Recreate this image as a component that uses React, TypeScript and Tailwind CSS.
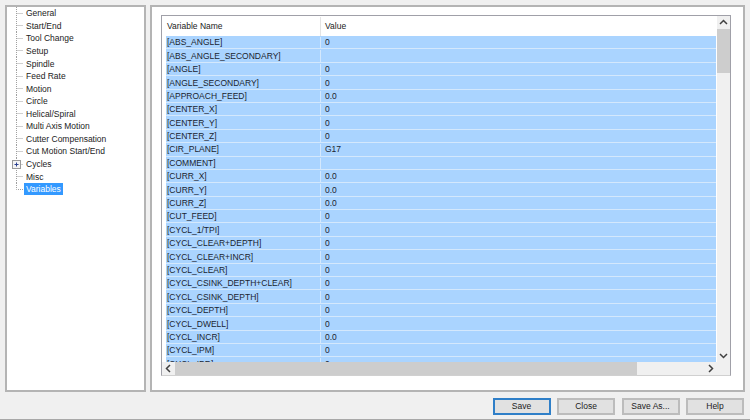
const treeItems = [
  'General', 'Start/End', 'Tool Change', 'Setup', 'Spindle', 'Feed Rate', 'Motion', 'Circle',
  'Helical/Spiral', 'Multi Axis Motion', 'Cutter Compensation', 'Cut Motion Start/End', 'Cycles', 'Misc', 'Variables',
]

const rows: [string, string][] = [
  ['[ABS_ANGLE]', '0'],
  ['[ABS_ANGLE_SECONDARY]', ''],
  ['[ANGLE]', '0'],
  ['[ANGLE_SECONDARY]', '0'],
  ['[APPROACH_FEED]', '0.0'],
  ['[CENTER_X]', '0'],
  ['[CENTER_Y]', '0'],
  ['[CENTER_Z]', '0'],
  ['[CIR_PLANE]', 'G17'],
  ['[COMMENT]', ''],
  ['[CURR_X]', '0.0'],
  ['[CURR_Y]', '0.0'],
  ['[CURR_Z]', '0.0'],
  ['[CUT_FEED]', '0'],
  ['[CYCL_1/TPI]', '0'],
  ['[CYCL_CLEAR+DEPTH]', '0'],
  ['[CYCL_CLEAR+INCR]', '0'],
  ['[CYCL_CLEAR]', '0'],
  ['[CYCL_CSINK_DEPTH+CLEAR]', '0'],
  ['[CYCL_CSINK_DEPTH]', '0'],
  ['[CYCL_DEPTH]', '0'],
  ['[CYCL_DWELL]', '0'],
  ['[CYCL_INCR]', '0.0'],
  ['[CYCL_IPM]', '0'],
  ['[CYCL_IPR]', '0'],
]

function TreeRow({ label, index }: { label: string; index: number }) {
  const last = index === treeItems.length - 1
  const hasPlus = label === 'Cycles'
  return (
    <div className="flex h-[12.57px] items-center">
      <svg width="17" height="13" className="shrink-0 overflow-visible text-[#a0a0a0]">
        <path d={last ? 'M9.5 0V6.5H16' : 'M9.5 0V13M9.5 6.5H16'} fill="none" stroke="currentColor" strokeDasharray="1 1" />
        {hasPlus && (
          <g>
            <rect x="5.5" y="2.5" width="8" height="8" fill="#f4f4f4" stroke="#9a9a9a" />
            <path d="M7.5 6.5h4M9.5 4.5v4" stroke="#2a3f8f" />
          </g>
        )}
      </svg>
      <span className={`px-[2px] leading-[12px] ${last ? 'bg-[#3399ff] text-white' : 'text-[#222]'}`}>{label}</span>
    </div>
  )
}

function Arrow({ d }: { d: string }) {
  return (
    <svg width="13" height="13" className="shrink-0">
      <path d={d} fill="none" stroke="#404040" strokeWidth="1.5" />
    </svg>
  )
}

function Button({ label, primary = false }: { label: string; primary?: boolean }) {
  return (
    <button
      className={`h-[17px] w-[58px] border-2 bg-[#e1e1e1] text-[#222] leading-none ${primary ? 'border-[#2f7fc8]' : 'border-[#bcbcbc]'}`}
    >
      {label}
    </button>
  )
}

export default function App() {
  return (
    <div className="flex h-[420px] w-[750px] flex-col overflow-hidden border-b border-[#a8a8a8] bg-[#f0f0f0] font-['Liberation_Sans',sans-serif] text-[8.5px]">
      <div className="flex h-[392px] gap-[4px] pl-[5px] pr-[5px] pt-[5px]">
        {/* tree */}
        <div className="h-[387px] w-[141px] border-2 border-[#b4b4b4] bg-white">
          {treeItems.map((t, i) => (
            <TreeRow key={t} label={t} index={i} />
          ))}
        </div>

        {/* variables panel */}
        <div className="h-[387px] flex-1 border-2 border-[#b4b4b4] bg-white pl-[9px] pt-[8px]">
          <div className="flex h-[361px] w-[570px] flex-col border border-[#a0a0a8] border-b-[#d0d0d0] bg-white">
            <div className="flex min-h-0 flex-1">
              <div className="min-w-0 flex-1 overflow-hidden pr-[1px]">
                <div className="flex h-[20px] items-center pt-[1px] text-[#222]">
                  <span className="w-[158px] pl-[5px]">Variable Name</span>
                  <span className="h-full w-px bg-[#e4e4e4]" />
                  <span className="pl-[4px]">Value</span>
                </div>
                <div className="pl-[4px]">
                  {rows.map(([name, value]) => (
                    <div key={name} className="flex h-[13.4px] items-center border-b border-[#d4e8fc] bg-[#aad4ff] pt-[1px] text-[#1a2430]">
                      <span className="w-[154px] truncate pl-[1px]">{name}</span>
                      <span className="h-full w-px bg-[#d4e8fc]" />
                      <span className="pl-[4px]">{value}</span>
                    </div>
                  ))}
                </div>
              </div>
              {/* vertical scrollbar */}
              <div className="flex w-[13px] shrink-0 flex-col bg-[#f0f0f0]">
                <Arrow d="M3 8l3.5-3.5L10 8" />
                <div className="h-[44px] bg-[#cdcdcd]" />
                <div className="flex-1" />
                <Arrow d="M3 5l3.5 3.5L10 5" />
              </div>
            </div>
            {/* horizontal scrollbar */}
            <div className="flex h-[13px] shrink-0 bg-[#f0f0f0]">
              <Arrow d="M8 3L4.5 6.5 8 10" />
              <div className="w-[462px] bg-[#cdcdcd]" />
              <div className="flex-1" />
              <Arrow d="M5 3l3.5 3.5L5 10" />
              <div className="w-[13px]" />
            </div>
          </div>
        </div>
      </div>

      <div className="flex flex-1 items-start justify-end gap-[6.5px] pr-[6px] pt-[6px]">
        <Button label="Save" primary />
        <Button label="Close" />
        <Button label="Save As..." />
        <Button label="Help" />
      </div>
    </div>
  )
}
